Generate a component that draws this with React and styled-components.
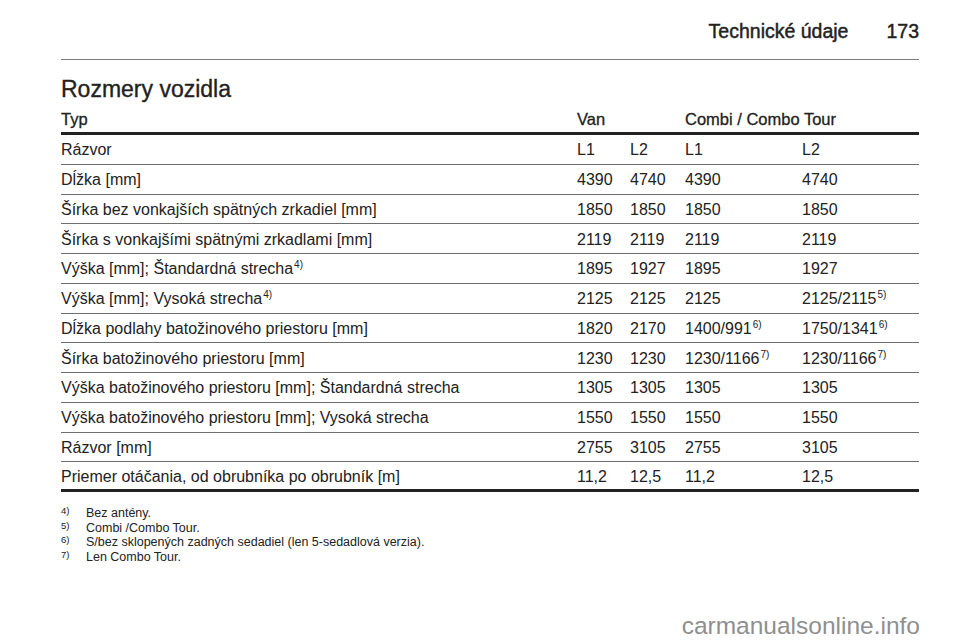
import React from "react";
import styled, { createGlobalStyle } from "styled-components";

const GlobalStyle = createGlobalStyle`
  html, body {
    margin: 0;
    padding: 0;
    background: #ffffff;
  }
  body {
    font-family: "Liberation Sans", Arial, sans-serif;
    color: #1e1e1e;
  }
`;

const rows = [
  { label: "Rázvor", cells: ["L1", "L2", "L1", "L2"] },
  { label: "Dĺžka [mm]", cells: ["4390", "4740", "4390", "4740"] },
  { label: "Šírka bez vonkajších spätných zrkadiel [mm]", cells: ["1850", "1850", "1850", "1850"] },
  { label: "Šírka s vonkajšími spätnými zrkadlami [mm]", cells: ["2119", "2119", "2119", "2119"] },
  { label: ["Výška [mm]; Štandardná strecha", "4)"], cells: ["1895", "1927", "1895", "1927"] },
  { label: ["Výška [mm]; Vysoká strecha", "4)"], cells: ["2125", "2125", "2125", ["2125/2115", "5)"]] },
  { label: "Dĺžka podlahy batožinového priestoru [mm]", cells: ["1820", "2170", ["1400/991", "6)"], ["1750/1341", "6)"]] },
  { label: "Šírka batožinového priestoru [mm]", cells: ["1230", "1230", ["1230/1166", "7)"], ["1230/1166", "7)"]] },
  { label: "Výška batožinového priestoru [mm]; Štandardná strecha", cells: ["1305", "1305", "1305", "1305"] },
  { label: "Výška batožinového priestoru [mm]; Vysoká strecha", cells: ["1550", "1550", "1550", "1550"] },
  { label: "Rázvor [mm]", cells: ["2755", "3105", "2755", "3105"] },
  { label: "Priemer otáčania, od obrubníka po obrubník [m]", cells: ["11,2", "12,5", "11,2", "12,5"] },
];

const notes = [
  ["4)", "Bez antény."],
  ["5)", "Combi /Combo Tour."],
  ["6)", "S/bez sklopených zadných sedadiel (len 5-sedadlová verzia)."],
  ["7)", "Len Combo Tour."],
];

const Page = styled.div`
  width: 960px;
  height: 642px;
  box-sizing: border-box;
  padding: 0 41px 0 61px;
  display: flex;
  flex-direction: column;
  position: relative;
  overflow: hidden;
`;

const RunningHead = styled.header`
  display: flex;
  justify-content: flex-end;
  align-items: baseline;
  gap: 38px;
  height: 60px;
  box-sizing: border-box;
  padding-top: 20px;
  border-bottom: 1.5px solid #7a7a7a;
  font-size: 19.5px;
  -webkit-text-stroke: 0.45px #222;
  color: #222;
`;

const Title = styled.h1`
  margin: 14px 0 0;
  font-weight: normal;
  font-size: 23px;
  line-height: 30px;
  -webkit-text-stroke: 0.35px #222;
  color: #222;
`;

const Table = styled.div`
  display: grid;
  grid-template-columns: 516px 53px 55px 117px 117px;
`;

const HeadCell = styled.div`
  grid-column: ${(p) => p.$span || "auto"};
  height: 31px;
  box-sizing: border-box;
  display: flex;
  align-items: center;
  padding-top: 2px;
  border-bottom: 3px solid #222;
  font-size: 16.5px;
  -webkit-text-stroke: 0.3px #222;
  color: #222;
`;

const Cell = styled.div`
  height: 29.75px;
  box-sizing: border-box;
  display: flex;
  align-items: center;
  padding-top: 2px;
  white-space: nowrap;
  font-size: 16px;
  color: #222;
  border-bottom: ${(p) => (p.$last ? "3px solid #222" : "1px solid #6e6e6e")};
`;

const Sup = styled.sup`
  font-size: 10px;
  line-height: 0;
  vertical-align: 6px;
  margin-left: 1px;
`;

const Notes = styled.div`
  margin-top: 14px;
  display: flex;
  flex-direction: column;
`;

const NoteRow = styled.div`
  display: flex;
  font-size: 12.5px;
  line-height: 14.7px;
  color: #222;
`;

const NoteMark = styled.span`
  width: 25px;
  font-size: 9.5px;
  position: relative;
  top: -2px;
`;

const Watermark = styled.div`
  position: absolute;
  right: 40px;
  bottom: 2px;
  font-size: 24.5px;
  color: #8f8f8f;
`;

function Value({ v }) {
  if (Array.isArray(v)) {
    return (
      <span>
        {v[0]}
        <Sup>{v[1]}</Sup>
      </span>
    );
  }
  return <span>{v}</span>;
}

export default function App() {
  return (
    <>
      <GlobalStyle />
      <Page>
        <RunningHead>
          <span>Technické údaje</span>
          <span>173</span>
        </RunningHead>
        <Title>Rozmery vozidla</Title>
        <Table>
          <HeadCell>Typ</HeadCell>
          <HeadCell $span="span 2">Van</HeadCell>
          <HeadCell $span="span 2">Combi / Combo Tour</HeadCell>
          {rows.map((r, i) => {
            const last = i === rows.length - 1;
            return (
              <React.Fragment key={i}>
                <Cell $last={last}>
                  <Value v={r.label} />
                </Cell>
                {r.cells.map((c, j) => (
                  <Cell key={j} $last={last}>
                    <Value v={c} />
                  </Cell>
                ))}
              </React.Fragment>
            );
          })}
        </Table>
        <Notes>
          {notes.map(([m, t]) => (
            <NoteRow key={m}>
              <NoteMark>{m}</NoteMark>
              <span>{t}</span>
            </NoteRow>
          ))}
        </Notes>
        <Watermark>carmanualsonline.info</Watermark>
      </Page>
    </>
  );
}
